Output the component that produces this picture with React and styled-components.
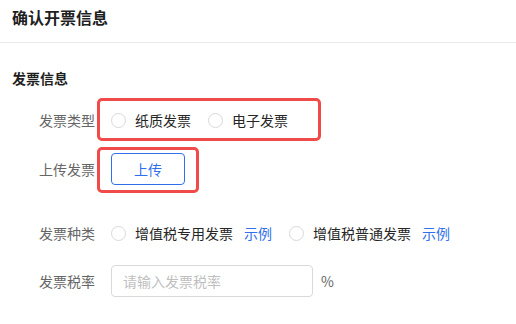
import React from 'react'
import styled, { createGlobalStyle } from 'styled-components'

const GlobalStyles = createGlobalStyle`
  html, body {
    margin: 0;
    padding: 0;
    background: #ffffff;
  }
  body {
    font-family: "Noto Sans CJK SC", "Noto Sans", sans-serif;
    font-size: 14px;
    color: #333333;
  }
`

const Page = styled.div`
  width: 516px;
  height: 324px;
  overflow: hidden;
  position: relative;
  box-sizing: border-box;
`

const Header = styled.div`
  height: 43px;
  box-sizing: border-box;
  padding: 5px 12px 0;
  line-height: 24px;
  font-size: 16px;
  font-weight: 700;
  color: #1f1f1f;
  border-bottom: 1px solid #ebebeb;
`

const SectionTitle = styled.div`
  margin-top: 24px;
  padding-left: 12px;
  line-height: 22px;
  font-size: 14px;
  font-weight: 700;
  color: #1f1f1f;
`

const Row = styled.div`
  display: flex;
  align-items: center;
  height: 32px;
  margin-top: ${p => p.$gap}px;
`

const Label = styled.div`
  width: 95px;
  text-align: right;
  padding-right: 16px;
  color: #666666;
  flex-shrink: 0;
`

const Controls = styled.div`
  position: relative;
  display: flex;
  align-items: center;
  height: 100%;
`

const Option = styled.label`
  display: flex;
  align-items: center;
  gap: 9px;
  margin-right: 17px;
  color: #262626;
  white-space: nowrap;
`

const Radio = styled.span`
  width: 15px;
  height: 15px;
  box-sizing: border-box;
  border: 1px solid #d9d9d9;
  border-radius: 50%;
  background: #fff;
`

const Example = styled.a`
  color: #2f6fed;
  margin-left: 2px;
  text-decoration: none;
`

const UploadButton = styled.button`
  width: 74px;
  height: 32px;
  box-sizing: border-box;
  border: 1px solid #2f6fed;
  border-radius: 4px;
  background: #fff;
  color: #2f6fed;
  font-family: inherit;
  font-size: 14px;
  padding: 0;
`

const Input = styled.input`
  width: 202px;
  height: 32px;
  box-sizing: border-box;
  border: 1px solid #d9d9d9;
  border-radius: 4px;
  padding: 0 11px;
  font-family: inherit;
  font-size: 14px;
  outline: none;
  &::placeholder {
    color: #bfbfbf;
  }
`

const Unit = styled.span`
  margin-left: 8px;
  color: #666666;
`

const Highlight = styled.span`
  position: absolute;
  top: ${p => p.$top}px;
  left: ${p => p.$left}px;
  width: ${p => p.$width}px;
  height: ${p => p.$height}px;
  box-sizing: border-box;
  border: 3px solid #f04a4a;
  border-radius: 5px;
  pointer-events: none;
`

export default function App() {
  return (
    <>
      <GlobalStyles />
      <Page>
        <Header>确认开票信息</Header>
        <SectionTitle>发票信息</SectionTitle>

        <Row $gap={15}>
          <Label>发票类型</Label>
          <Controls>
            <Option><Radio />纸质发票</Option>
            <Option><Radio />电子发票</Option>
            <Highlight $top={-6} $left={-14} $width={224} $height={43} />
          </Controls>
        </Row>

        <Row $gap={17}>
          <Label>上传发票</Label>
          <Controls>
            <UploadButton>上传</UploadButton>
            <Highlight $top={-6} $left={-14} $width={102} $height={46} />
          </Controls>
        </Row>

        <Row $gap={32}>
          <Label>发票种类</Label>
          <Controls>
            <Option>
              <Radio />增值税专用发票<Example>示例</Example>
            </Option>
            <Option>
              <Radio />增值税普通发票<Example>示例</Example>
            </Option>
          </Controls>
        </Row>

        <Row $gap={16}>
          <Label>发票税率</Label>
          <Controls>
            <Input placeholder="请输入发票税率" />
            <Unit>%</Unit>
          </Controls>
        </Row>
      </Page>
    </>
  )
}
